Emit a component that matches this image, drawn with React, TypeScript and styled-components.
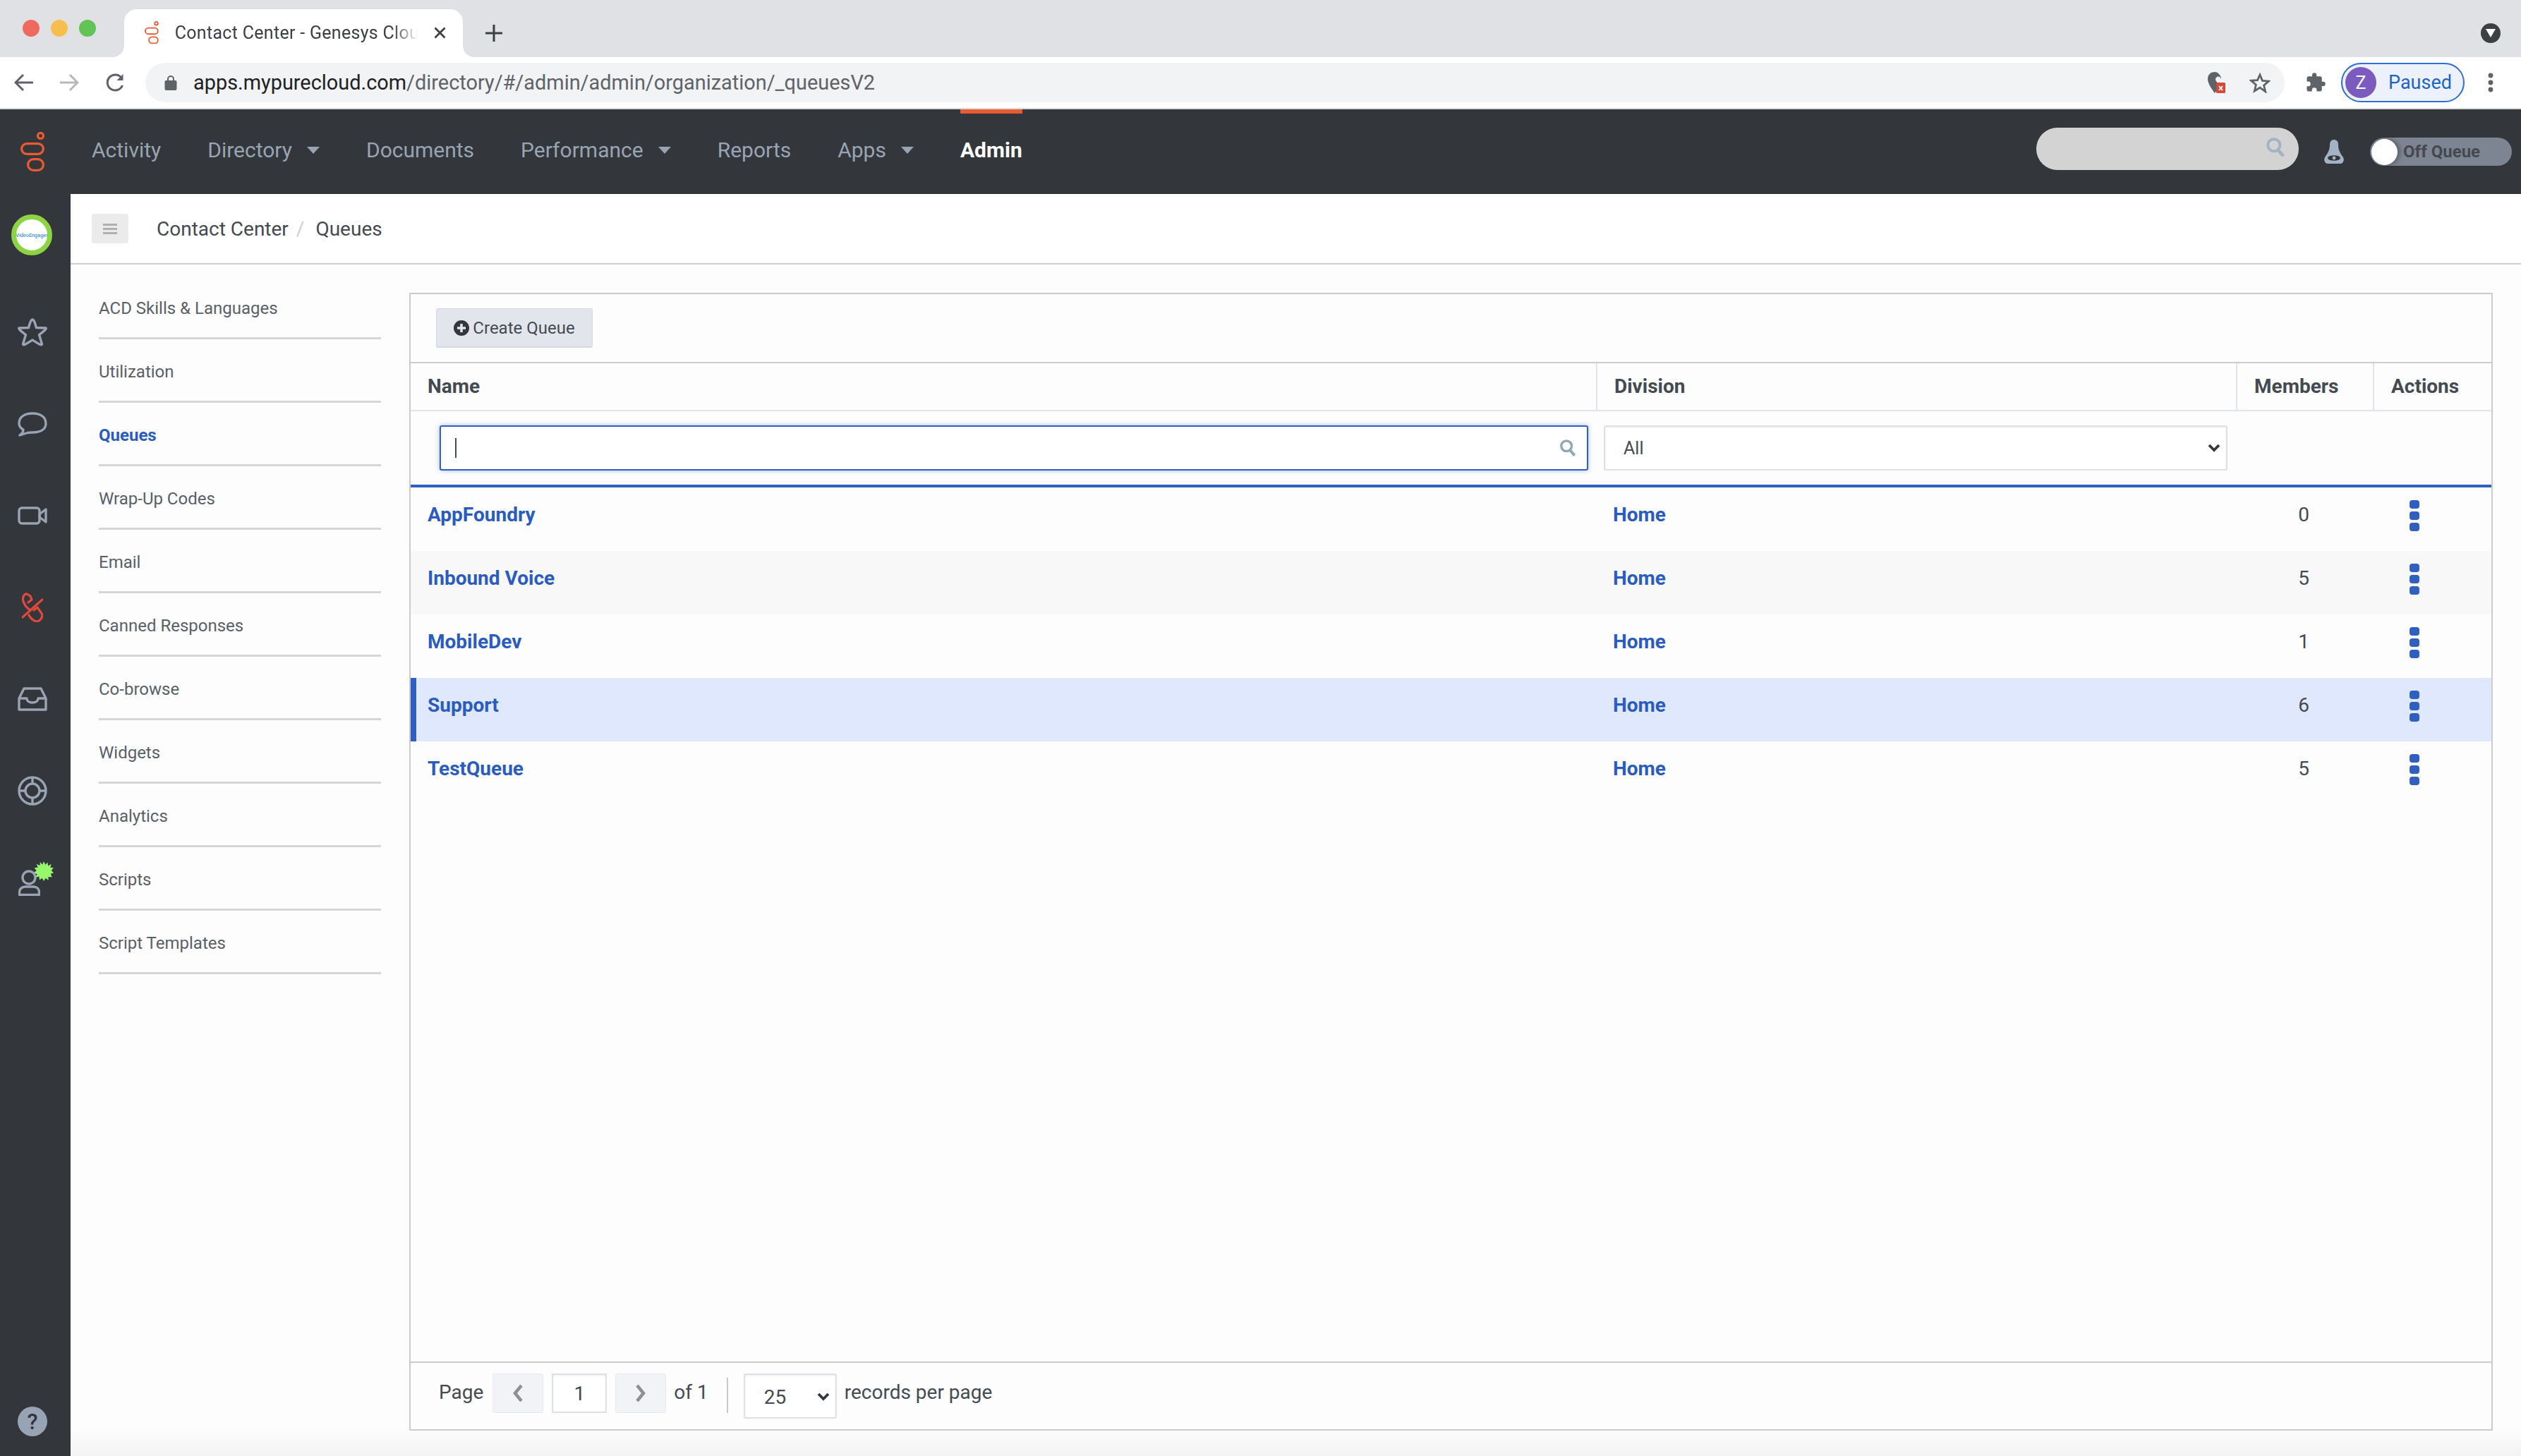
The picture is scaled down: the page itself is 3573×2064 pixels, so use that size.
import React from "react";
import styled, { createGlobalStyle } from "styled-components";

const Global = createGlobalStyle`
  html, body { margin: 0; padding: 0; background: #fdfdfd; }
  * { box-sizing: border-box; }
  #root { width: 3573px; height: 2064px; overflow: hidden; }
`;

const FONT = `Roboto, "Liberation Sans", sans-serif`;

const Page = styled.div`
  width: 3573px; height: 2064px; display: grid;
  grid-template-rows: 81px 74px 120px 1fr;
  font-family: ${FONT}; color: #444a52; overflow: hidden;
`;

/* ---------- browser chrome ---------- */
const TabStrip = styled.div`
  background: #dfe1e5; display: flex; align-items: flex-end; padding-left: 32px; position: relative;
`;
const Lights = styled.div`
  display: flex; gap: 16px; align-self: flex-start; margin-top: 28px; margin-right: 40px;
`;
const Light = styled.span<{ $c: string }>`
  width: 24px; height: 24px; border-radius: 50%; background: ${p => p.$c};
`;
const Tab = styled.div`
  width: 480px; height: 68px; background: #fff; border-radius: 18px 18px 0 0; position: relative;
  display: flex; align-items: center; padding: 0 24px 2px 29px; gap: 23px;
  &::before, &::after {
    content: ""; position: absolute; bottom: 0; width: 16px; height: 16px;
  }
  &::before { left: -16px; background: radial-gradient(circle at 0 0, transparent 15.5px, #fff 16px); }
  &::after { right: -16px; background: radial-gradient(circle at 100% 0, transparent 15.5px, #fff 16px); }
`;
const TabTitle = styled.div`
  flex: 1; font-size: 25px; color: #3c4043; white-space: nowrap; overflow: hidden; letter-spacing: .3px;
  -webkit-mask-image: linear-gradient(90deg, #000 90%, transparent 100%);
  mask-image: linear-gradient(90deg, #000 90%, transparent 100%);
`;
const NewTab = styled.div`
  margin-left: 32px; align-self: center; margin-top: 13px; display: flex;
`;
const CaretCircle = styled.div`
  margin-left: auto; margin-right: 29px; align-self: center; width: 28px; height: 28px; margin-top: 13px;
  border-radius: 50%; background: #3c4043; display: flex; align-items: center; justify-content: center;
`;

const Toolbar = styled.div`
  background: #fff; border-bottom: 2px solid #d9dadc; display: flex; align-items: center; padding: 0 0 0 20px;
  height: 74px;
`;
const NavIcons = styled.div`
  display: flex; gap: 38px; align-items: center; margin-right: 29px;
`;
const Omnibox = styled.div`
  width: 3032px; height: 56px; background: #f1f3f4; border-radius: 28px; display: flex; align-items: center;
  padding: 0 20px 0 27px;
`;
const Url = styled.div`
  font-size: 28.9px; color: #5f6368; margin-left: 23px; flex: 1; white-space: nowrap;
`;
const UrlHost = styled.span` color: #202124; `;
const ProfileRow = styled.div`
  display: flex; align-items: center; margin-left: 29px; gap: 21px;
`;
const Pill = styled.div`
  width: 175px; height: 56px; border: 2px solid #2f6fd6; border-radius: 28px; background: #ecf1fb;
  display: flex; align-items: center; padding-left: 4px; gap: 17px;
  color: #1e64c8; font-size: 27px; font-weight: 400;
`;
const ZCircle = styled.span`
  width: 44px; height: 44px; border-radius: 50%; background: #7b5bbd; color: #fff; font-size: 25px;
  display: flex; align-items: center; justify-content: center;
`;
const Omniend = styled.div` display: flex; align-items: center; gap: 34px; `;

/* ---------- app top nav ---------- */
const TopNav = styled.div`
  background: #33363b; display: flex; align-items: center; padding-left: 29px; position: relative;
`;
const NavItems = styled.nav`
  display: flex; align-items: center; gap: 66px; margin-left: 67px; margin-top: -5px;
`;
const NavItem = styled.div<{ $active?: boolean }>`
  font-size: 30px; color: ${p => (p.$active ? "#fff" : "#98a4b3")}; font-weight: ${p => (p.$active ? 700 : 400)};
  display: flex; align-items: center; gap: 21px; position: relative; height: 40px;
  ${p => p.$active && `
    &::before {
      content: ""; position: absolute; left: 0; right: 0; top: -37.500px; height: 6px; background: #ea5b32;
    }
  `}
`;
const NavRight = styled.div`
  margin-left: auto; display: flex; align-items: center; margin-right: 13px;
`;
const GlobalSearch = styled.div`
  width: 372px; height: 60px; border-radius: 30px; background: #d3d3d3; display: flex; align-items: center;
  justify-content: flex-end; padding: 0 19px 4px 0; margin-top: -8px;
`;
const Bell = styled.div` margin-left: 35px; margin-right: 36px; display: flex; `;
const Toggle = styled.div`
  width: 201px; height: 40px; border-radius: 20px; background: #7d8492; display: flex; align-items: center;
  color: #45494f; font-size: 24px; font-weight: 700; padding-left: 2px; gap: 8px;
`;
const Knob = styled.span`
  width: 37px; height: 37px; border-radius: 50%; background: #fff; box-shadow: 3px 0 6px rgba(30,30,30,.4);
`;

/* ---------- body ---------- */
const Body = styled.div` display: flex; min-height: 0; `;
const Rail = styled.aside`
  width: 100px; background: #33363b; display: flex; flex-direction: column; align-items: center; padding: 29px 8px 0 0;
`;
const Avatar = styled.div`
  width: 58px; height: 58px; border-radius: 50%; border: 7px solid #8cd443; background: #fff; margin-bottom: 44px;
  display: flex; align-items: center; justify-content: center; margin-left: -2px; overflow: hidden;
  font-size: 7.500px; font-weight: 500; white-space: nowrap; color: #4f94d0; letter-spacing: -.1px;
`;
const RailItem = styled.div`
  height: 130px; display: flex; align-items: center; justify-content: center; width: 100%; flex: none;
  position: relative;
`;
const Burst = styled.svg`
  position: absolute; left: 48px; top: 35px;
`;
const Help = styled.div`
  margin-top: auto; margin-bottom: 28px; width: 42px; height: 42px; border-radius: 50%; background: #98a4b5;
  color: #33363b; font-weight: 500; font-size: 31px; display: flex; align-items: center; justify-content: center;
`;

const Main = styled.main`
  flex: 1; min-width: 0; display: grid; grid-template-rows: 100px 1fr;
  background: linear-gradient(#fdfdfd 0, #fdfdfd 1750px, #f3f3f3 100%);
`;
const Crumbs = styled.div`
  background: #fff; border-bottom: 2px solid #cfcfcf; display: flex; align-items: center; padding: 0 0 0 30px;
  font-size: 28px; color: #444a52;
`;
const MenuBtn = styled.div`
  width: 52px; height: 42px; background: #ebebeb; border-radius: 4px; margin-right: 40px; display: flex;
  flex-direction: column; gap: 3px; align-items: center; justify-content: center;
  & > i { display: block; width: 20px; height: 3px; background: #b0b0b0; }
`;
const Sep = styled.span` color: #cfcfcf; margin: 0 16px 0 11px; `;

const Content = styled.div`
  display: grid; grid-template-columns: 400px 2953px; column-gap: 40px; padding: 0 0 36px 40px; min-height: 0;
`;
const Menu = styled.ul`
  list-style: none; margin: 0; padding: 16px 0 0;
`;
const MenuItem = styled.li<{ $active?: boolean }>`
  height: 90px; border-bottom: 3px solid #d6d6d6; display: flex; align-items: center; padding-top: 4px;
  font-size: 24px; color: ${p => (p.$active ? "#2a5cbf" : "#5a6067")}; font-weight: ${p => (p.$active ? 700 : 400)};
`;

const Panel = styled.section`
  margin-top: 40px; border: 2px solid #cccccc; display: flex; flex-direction: column; min-height: 0; background: #fdfdfd;
`;
const PanelBar = styled.div`
  height: 98px; border-bottom: 2px solid #cccccc; display: flex; align-items: center; padding-left: 36px; flex: none;
`;
const CreateBtn = styled.button`
  width: 222px; height: 56px; background: #e2e6ec; border: 1px solid #d5d9e0; border-bottom-width: 2px; border-radius: 3px;
  display: flex; align-items: center; justify-content: center; gap: 5px; font-family: ${FONT}; font-size: 24px; color: #444a52; padding: 0;
`;

const COLS = "1680px 907px 194px 1fr";
const HeadRow = styled.div`
  display: grid; grid-template-columns: ${COLS}; height: 68px; border-bottom: 2px solid #e0e4eb; flex: none;
`;
const HeadCell = styled.div<{ $first?: boolean }>`
  display: flex; align-items: center; padding: 0 0 2px 24px; font-size: 28px; font-weight: 700; color: #444a52;
  border-left: ${p => (p.$first ? "none" : "2px solid #e0e4eb")};
`;
const FilterRow = styled.div`
  display: grid; grid-template-columns: ${COLS}; height: 108px; border-bottom: 4px solid #2f5fc0; flex: none; padding-top: 20px;
`;
const SearchField = styled.div`
  margin-left: 41px; width: 1628px; height: 64px; border: 2px solid #2f5fc0; border-radius: 3px; background: #fff;
  box-shadow: 0 0 6px rgba(47,95,192,.45); display: flex; align-items: center; justify-content: space-between; padding: 0 15px 0 20px;
`;
const Caret = styled.span` display: block; width: 2px; height: 28px; background: #444a52; `;
const SelectBox = styled.div`
  margin-left: 11px; width: 884px; height: 64px; border: 2px solid #dde1e6; border-radius: 3px; background: #fff;
  box-shadow: inset 0 1px 3px rgba(0,0,0,.08); display: flex; align-items: center; justify-content: space-between;
  padding: 0 8px 0 26px; font-size: 25px; color: #444a52;
`;
const Rows = styled.div` flex: 1; min-height: 0; `;
const Row = styled.div<{ $tone: "plain" | "alt" | "selected" }>`
  display: grid; grid-template-columns: ${COLS}; height: 90px; padding-bottom: 14px;
  background: ${p => (p.$tone === "alt" ? "#f8f8f9" : p.$tone === "selected" ? "#dfe8fc" : "transparent")};
  box-shadow: ${p => (p.$tone === "selected" ? "inset 8px 0 0 #2f5fc0" : "none")};
`;
const LinkCell = styled.div`
  display: flex; align-items: center; padding-left: 24px; font-size: 28px; font-weight: 700; color: #2a5cbf;
`;
const NumCell = styled.div`
  display: flex; align-items: center; justify-content: center; font-size: 28px; color: #444a52; padding-right: 2px;
`;
const ActCell = styled.div` display: flex; align-items: center; padding-left: 52px; padding-top: 4px; `;
const Kebab = styled.div`
  display: flex; flex-direction: column; gap: 4px;
  & > i { display: block; width: 14px; height: 12px; background: #2f5fc0; border-radius: 4px; }
`;
const Pager = styled.div`
  height: 96px; border-top: 2px solid #cccccc; flex: none; display: flex; align-items: flex-start; padding: 15px 0 0 40px;
  font-size: 28px; color: #444a52;
`;
const PagerText = styled.span<{ $ml?: number }>`
  line-height: 54px; margin-left: ${p => p.$ml ?? 0}px; white-space: nowrap;
`;
const PageBtn = styled.div<{ $ml: number }>`
  width: 72px; height: 56px; margin-left: ${p => p.$ml}px; background: #f1f3f6; border: 1px solid #e6e9ee; border-radius: 3px;
  display: flex; align-items: center; justify-content: center;
`;
const PageInput = styled.div`
  width: 78px; height: 56px; margin-left: 12px; border: 2px solid #dde1e6; background: #fff; display: flex; align-items: center;
  justify-content: center; box-shadow: inset 0 1px 3px rgba(0,0,0,.08);
`;
const PagerDivider = styled.span` width: 2px; height: 50px; margin: 6px 0 0 26px; background: #c8c8c8; `;
const PerPage = styled.div`
  width: 132px; height: 64px; margin: 0 11px 0 22px; border: 2px solid #dde1e6; border-radius: 3px; background: #fff;
  box-shadow: inset 0 1px 3px rgba(0,0,0,.08); display: flex; align-items: center; justify-content: space-between; padding: 2px 8px 0 27px;
`;

/* ---------- drawn icons ---------- */
const GenesysLogo = ({ size = 1, color = "#ea5b32" }: { size?: number; color?: string }) => (
  <svg width={34 * size} height={56 * size} viewBox="0 0 34 56" fill="none" stroke={color} strokeWidth="3.200">
    <circle cx="28.500" cy="5.500" r="4" />
    <rect x="1.600" y="16.600" width="30.800" height="14.800" rx="7.400" />
    <rect x="10.600" y="38.600" width="21.800" height="15.800" rx="7.900" />
  </svg>
);
const Chevron = ({ stroke = "#33363b" }: { stroke?: string }) => (
  <svg width="18" height="12" viewBox="0 0 18 12" fill="none" stroke={stroke} strokeWidth="3.800"><path d="M2 2l7 7 7-7" /></svg>
);
const NavCaret = () => (
  <svg width="18" height="10" viewBox="0 0 18 10" fill="#98a4b3"><path d="M0 0h18L9 10z" /></svg>
);
const SearchIcon = ({ color, w, h }: { color: string; w: number; h: number }) => (
  <svg width={w} height={h} viewBox="0 0 26 28" fill="none" stroke={color}>
    <circle cx="11" cy="11" r="8" strokeWidth="3.600" />
    <path d="M16.500 17.500l7 8" strokeWidth="4.400" />
  </svg>
);
const rail = { fill: "none", stroke: "#98a4b3", strokeWidth: 3.4 };

export default function App() {
  const menu = ["ACD Skills & Languages", "Utilization", "Queues", "Wrap-Up Codes", "Email", "Canned Responses", "Co-browse", "Widgets", "Analytics", "Scripts", "Script Templates"];
  const rows: { name: string; n: number; tone: "plain" | "alt" | "selected" }[] = [
    { name: "AppFoundry", n: 0, tone: "plain" },
    { name: "Inbound Voice", n: 5, tone: "alt" },
    { name: "MobileDev", n: 1, tone: "plain" },
    { name: "Support", n: 6, tone: "selected" },
    { name: "TestQueue", n: 5, tone: "plain" },
  ];
  return (
    <Page>
      <Global />
      <TabStrip>
        <Lights>
          <Light $c="#ee6a5f" /><Light $c="#f5be4f" /><Light $c="#61c454" />
        </Lights>
        <Tab>
          <GenesysLogo size={0.58} />
          <TabTitle>Contact Center - Genesys Cloud</TabTitle>
          <svg width="17" height="17" viewBox="0 0 17 17" stroke="#3c4043" strokeWidth="2.800"><path d="M1.500 1.500l14 14M15.500 1.500l-14 14" /></svg>
        </Tab>
        <NewTab>
          <svg width="24" height="24" viewBox="0 0 24 24" stroke="#3c4043" strokeWidth="3"><path d="M12 0v24M0 12h24" /></svg>
        </NewTab>
        <CaretCircle>
          <svg width="14" height="12" viewBox="0 0 14 12" fill="#fff"><path d="M0 0h14L7 12z" /></svg>
        </CaretCircle>
      </TabStrip>

      <Toolbar>
        <NavIcons>
          <svg width="27" height="26" viewBox="0 0 27 26" fill="none" stroke="#5f6368" strokeWidth="3"><path d="M27 13H3M13 2L2 13l11 11" /></svg>
          <svg width="27" height="26" viewBox="0 0 27 26" fill="none" stroke="#b6b8bb" strokeWidth="3"><path d="M0 13h24M14 2l11 11-11 11" /></svg>
          <svg width="27" height="27" viewBox="0 0 27 27" fill="none" stroke="#5f6368" strokeWidth="3"><path d="M23.500 17a11 11 0 1 1-1-10" /><path d="M24.500 1v9h-9" fill="#5f6368" stroke="none" /></svg>
        </NavIcons>
        <Omnibox>
          <svg width="18" height="22" viewBox="0 0 18 22" fill="#5f6368"><path d="M4 9V6a5 5 0 0 1 10 0v3h-2V6a3 3 0 0 0-6 0v3z" /><rect x="0.500" y="8" width="17" height="14" rx="2" /></svg>
          <Url><UrlHost>apps.mypurecloud.com</UrlHost>/directory/#/admin/admin/organization/_queuesV2</Url>
          <Omniend>
            <svg width="26" height="32" viewBox="0 0 26 32">
              <path d="M11 1C5 1 1 5 1 11c0 6 6 15 10 20 1-1 2-3 3-5V15a4 4 0 1 1 6-3.500V9C18 4 15 1 11 1z" fill="#5f6368" />
              <rect x="13" y="16" width="13" height="15" rx="1.500" fill="#d24a3b" />
              <path d="M17 21l5 6M22 21l-5 6" stroke="#fff" strokeWidth="1.800" />
            </svg>
            <svg width="30" height="29" viewBox="0 0 30 29" fill="none" stroke="#5f6368" strokeWidth="2.800"><path d="M15 3l3.500 8.400 9 .7-6.900 5.900 2.100 8.800L15 21.200 7.300 26l2.100-8.800L2.500 11.300l9-.7z" /></svg>
          </Omniend>
        </Omnibox>
        <ProfileRow>
          <svg width="30" height="30" viewBox="0 0 24 24" fill="#5f6368"><path d="M20.500 11H19V7a2 2 0 0 0-2-2h-4V3.500a2.500 2.500 0 0 0-5 0V5H4a2 2 0 0 0-2 2v3.800h1.500a2.700 2.700 0 0 1 0 5.400H2V20a2 2 0 0 0 2 2h3.800v-1.500a2.700 2.700 0 0 1 5.400 0V22H17a2 2 0 0 0 2-2v-4h1.500a2.500 2.500 0 0 0 0-5z" /></svg>
          <Pill><ZCircle>Z</ZCircle>Paused</Pill>
          <svg width="10" height="28" viewBox="0 0 10 28" fill="#5f6368" style={{ marginLeft: 11 }}><circle cx="5" cy="4" r="3.400" /><circle cx="5" cy="14" r="3.400" /><circle cx="5" cy="24" r="3.400" /></svg>
        </ProfileRow>
      </Toolbar>

      <TopNav>
        <GenesysLogo />
        <NavItems>
          <NavItem>Activity</NavItem>
          <NavItem>Directory <NavCaret /></NavItem>
          <NavItem>Documents</NavItem>
          <NavItem>Performance <NavCaret /></NavItem>
          <NavItem>Reports</NavItem>
          <NavItem>Apps <NavCaret /></NavItem>
          <NavItem $active>Admin</NavItem>
        </NavItems>
        <NavRight>
          <GlobalSearch><SearchIcon color="#a3b2c4" w={28} h={30} /></GlobalSearch>
          <Bell>
            <svg width="30" height="34" viewBox="0 0 30 34">
              <path d="M15 0c4 0 6 3 6 7 0 7 2 11 7 18 2 4 0 9-4 9H6c-4 0-6-5-4-9 5-7 7-11 7-18 0-4 2-7 6-7z" fill="#a3b2c4" />
              <ellipse cx="15" cy="26" rx="9" ry="3.800" fill="#33363b" />
              <circle cx="15" cy="26" r="2.400" fill="#a3b2c4" />
            </svg>
          </Bell>
          <Toggle><Knob />Off Queue</Toggle>
        </NavRight>
      </TopNav>

      <Body>
        <Rail>
          <Avatar>VideoEngager</Avatar>
          <RailItem>
            <svg width="42" height="42" viewBox="0 0 42 42" {...rail} strokeLinejoin="round"><path d="M21 3c1.800 0 3 3 5.500 11.500L40 15c1 1-1 3-9.500 9.500L34.500 38c-1 2-4 0-13.500-6-9.500 6-12.500 8-13.500 6l4-13.500C3 18 1 16 2 15l13.500-.5C18 6 19.200 3 21 3z" /></svg>
          </RailItem>
          <RailItem>
            <svg width="42" height="38" viewBox="0 0 42 38" {...rail}><path d="M8 27C4 25 2 21 2 18 2 9 10 4 21 4s19 5 19 14-8 13-19 13c-3 0-5 0-7 .500L3 35c3-2 5-5 5-8z" strokeLinejoin="round" /></svg>
          </RailItem>
          <RailItem>
            <svg width="42" height="26" viewBox="0 0 42 26" {...rail}><rect x="2" y="2" width="29" height="22" rx="4" /><path d="M31 11l9-7v18l-9-7z" strokeLinejoin="round" /></svg>
          </RailItem>
          <RailItem>
            <svg width="30" height="42" viewBox="0 0 30 42" fill="none" stroke="#e0493c" strokeWidth="3.200" strokeLinejoin="round" strokeLinecap="round">
              <path d="M1 35L29 10" />
              <path d="M12 5L7 1.800C3.500 1.500 1 6 1.500 11 3 17 7 22 12 25M12 5l2 5-5 4" />
              <path d="M17 25l5-4 7 10c0 6-4 10-9 10-5-2-8-5-10-9" />
            </svg>
          </RailItem>
          <RailItem>
            <svg width="42" height="34" viewBox="0 0 42 34" {...rail} strokeLinejoin="round"><path d="M9 2h24l7 14v16H2V16zM2 16h11c0 4 4 6 8 6s8-2 8-6h11" /></svg>
          </RailItem>
          <RailItem>
            <svg width="42" height="42" viewBox="0 0 42 42" {...rail}><circle cx="21" cy="21" r="19" /><circle cx="21" cy="21" r="10" /><path d="M21 2v9M21 31v9M2 21h9M31 21h9" /></svg>
          </RailItem>
          <RailItem>
            <svg width="31" height="37" viewBox="0 0 31 37" {...rail} style={{ marginLeft: -10 }}><circle cx="15" cy="11" r="9" /><path d="M1.500 35.500v-3.500c0-5 4-8 8-8h12c5 0 8 3 8 8v3.500z" strokeLinejoin="round" /></svg>
            <Burst width="28" height="28" viewBox="0 0 30 30"><polygon fill="#98f56e" points="15,0 17.500,5 21,1.500 21.500,7 26.500,4 25,9.500 30,10 26.500,14 30,17.500 25.500,19 27.500,24 22,23.500 22,29 18,25.500 15,30 12.500,25.500 8.500,28.500 8,23 2.500,24.500 5,19.500 0,17.500 4,14 0.500,10 6,9.500 4,4 9,6.500 9.500,1 13,5" /></Burst>
          </RailItem>
          <Help>?</Help>
        </Rail>

        <Main>
          <Crumbs>
            <MenuBtn><i /><i /><i /></MenuBtn>
            Contact Center<Sep>/</Sep>Queues
          </Crumbs>
          <Content>
            <Menu>
              {menu.map(m => <MenuItem key={m} $active={m === "Queues"}>{m}</MenuItem>)}
            </Menu>
            <Panel>
              <PanelBar>
                <CreateBtn>
                  <svg width="22" height="22" viewBox="0 0 22 22"><circle cx="11" cy="11" r="11" fill="#33363b" /><path d="M11 5v12M5 11h12" stroke="#e2e6ec" strokeWidth="3.500" /></svg>
                  Create Queue
                </CreateBtn>
              </PanelBar>
              <HeadRow>
                <HeadCell $first>Name</HeadCell>
                <HeadCell>Division</HeadCell>
                <HeadCell>Members</HeadCell>
                <HeadCell>Actions</HeadCell>
              </HeadRow>
              <FilterRow>
                <SearchField>
                  <Caret />
                  <SearchIcon color="#8ea8b4" w={24} h={26} />
                </SearchField>
                <SelectBox>All<Chevron /></SelectBox>
              </FilterRow>
              <Rows>
                {rows.map(r => (
                  <Row key={r.name} $tone={r.tone}>
                    <LinkCell>{r.name}</LinkCell>
                    <LinkCell>Home</LinkCell>
                    <NumCell>{r.n}</NumCell>
                    <ActCell><Kebab><i /><i /><i /></Kebab></ActCell>
                  </Row>
                ))}
              </Rows>
              <Pager>
                <PagerText>Page</PagerText>
                <PageBtn $ml={13}>
                  <svg width="16" height="26" viewBox="0 0 16 26" fill="none" stroke="#8f8f8f" strokeWidth="4.500"><path d="M13 2L4 13l9 11" /></svg>
                </PageBtn>
                <PageInput>1</PageInput>
                <PageBtn $ml={12}>
                  <svg width="16" height="26" viewBox="0 0 16 26" fill="none" stroke="#8f8f8f" strokeWidth="4.500"><path d="M3 2l9 11-9 11" /></svg>
                </PageBtn>
                <PagerText $ml={11}>of 1</PagerText>
                <PagerDivider />
                <PerPage>25<Chevron /></PerPage>
                <PagerText>records per page</PagerText>
              </Pager>
            </Panel>
          </Content>
        </Main>
      </Body>
    </Page>
  );
}
